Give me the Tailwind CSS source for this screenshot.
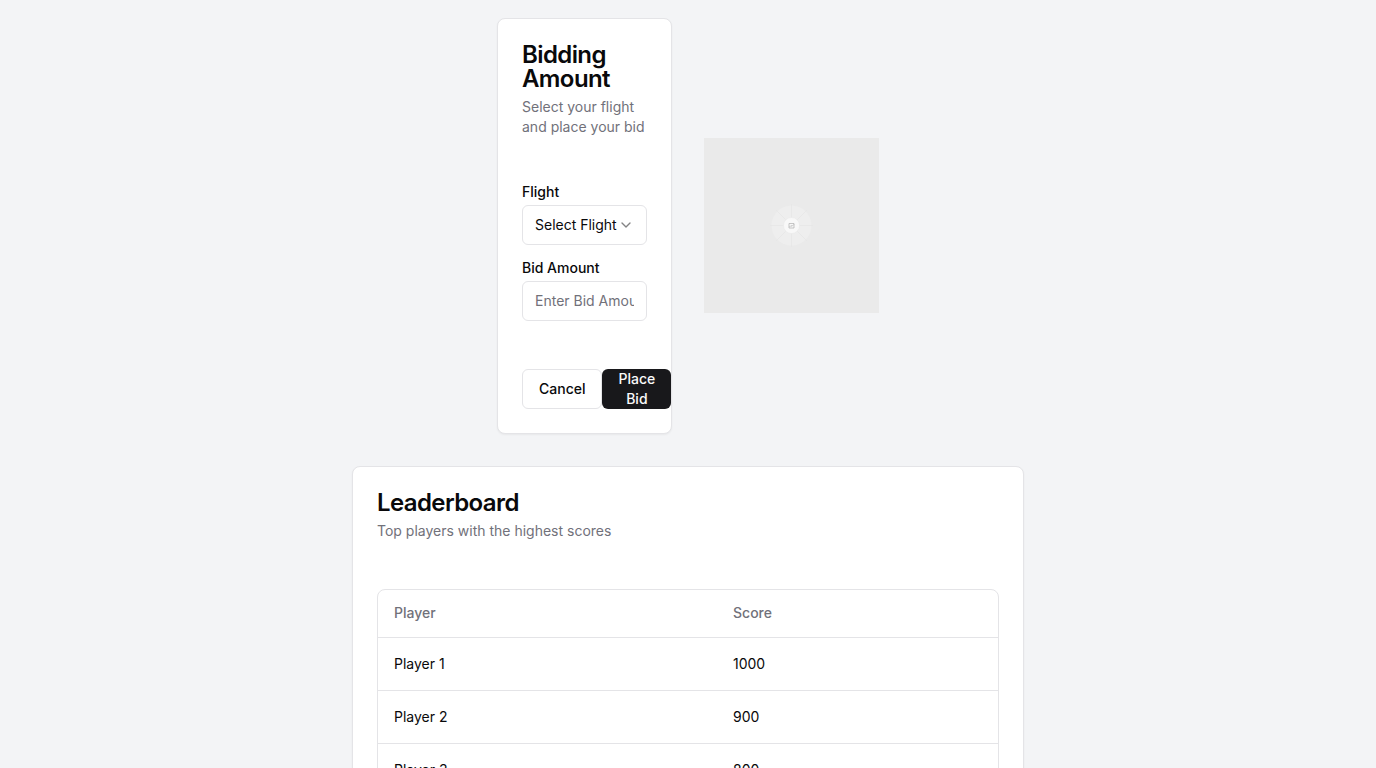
<!DOCTYPE html>
<html lang="en">
<head>
<meta charset="utf-8">
<meta name="viewport" content="width=device-width, initial-scale=1">
<title>Bidding</title>
<script src="https://cdn.jsdelivr.net/npm/@tailwindcss/browser@4"></script>
</head>
<body class="min-h-screen bg-gray-100 font-['Inter',sans-serif] text-zinc-950">
<main class="flex flex-col items-center gap-8 py-[18px]">
  <div class="grid w-full max-w-[382px] grid-cols-2 items-center gap-8">
    <section class="min-w-0 rounded-lg border border-[#e4e4e7] bg-white shadow-xs">
      <header class="flex flex-col gap-1.5 p-6">
        <h1 class="text-2xl leading-none font-semibold tracking-tight">Bidding Amount</h1>
        <p class="text-sm text-[#71717a]">Select your flight and place your bid</p>
      </header>
      <form id="bid" class="flex flex-col gap-4 p-6">
        <div class="flex flex-col gap-1.5">
          <label for="flight" class="text-sm leading-none font-medium">Flight</label>
          <div class="relative">
            <select id="flight" class="h-10 w-full appearance-none rounded-md border border-[#e4e4e7] bg-white px-3 text-sm">
              <option>Select Flight</option>
            </select>
            <svg class="pointer-events-none absolute top-3 right-[13px] size-4 opacity-50" viewBox="0 0 24 24" fill="none" stroke="currentColor" stroke-width="2" stroke-linecap="round" stroke-linejoin="round" aria-hidden="true"><path d="m6 9 6 6 6-6"/></svg>
          </div>
        </div>
        <div class="flex flex-col gap-1.5">
          <label for="amount" class="text-sm leading-none font-medium">Bid Amount</label>
          <input id="amount" type="text" placeholder="Enter Bid Amount" class="h-10 w-full rounded-md border border-[#e4e4e7] bg-white px-3 pb-0.5 text-sm placeholder:text-[#71717a]">
        </div>
      </form>
      <footer class="flex items-center justify-between p-6">
        <button type="reset" form="bid" class="flex h-10 items-center justify-center rounded-md border border-[#e4e4e7] bg-white px-4 text-sm font-medium">Cancel</button>
        <button type="submit" form="bid" class="flex h-10 items-center justify-center rounded-md bg-[#18181b] px-4 text-sm font-medium text-zinc-50">Place Bid</button>
      </footer>
    </section>
    <div class="pb-0.5">
      <svg class="block aspect-square w-full bg-[#eaeaea]" viewBox="0 0 175 175" fill="none" role="img" aria-label="Placeholder">
        <circle cx="87.500" cy="87.500" r="20" fill="#eeeeee"/>
        <path d="M87.500 66v43M66 87.500h43M72 72l31 31M103 72l-31 31" stroke="#e5e5e5" stroke-width=".7"/>
        <circle cx="87.500" cy="87.500" r="8" fill="#f8f8f8" stroke="#e7e7e7" stroke-width=".5"/>
        <path d="M85 85.500h5v4.500h-5zM85.500 89l1.500-1.500 1 .8 2-2" stroke="#b0b0b0" stroke-width=".7"/>
      </svg>
    </div>
  </div>
  <section class="w-full max-w-2xl rounded-lg border border-[#e4e4e7] bg-white shadow-xs">
    <header class="flex flex-col gap-1.5 p-6">
      <h2 class="text-2xl leading-none font-semibold tracking-tight">Leaderboard</h2>
      <p class="text-sm text-[#71717a]">Top players with the highest scores</p>
    </header>
    <div class="p-6">
      <div class="overflow-hidden rounded-lg border border-[#e4e4e7]">
        <table class="w-full text-left text-sm">
          <thead>
            <tr class="border-b border-[#e4e4e7] text-[#71717a]">
              <th scope="col" class="h-[47px] px-4 font-medium">Player</th>
              <th scope="col" class="h-[47px] px-4 font-medium">Score</th>
            </tr>
          </thead>
          <tbody>
            <tr class="border-b border-[#e4e4e7]"><td class="p-4">Player 1</td><td class="p-4">1000</td></tr>
            <tr class="border-b border-[#e4e4e7]"><td class="p-4">Player 2</td><td class="p-4">900</td></tr>
            <tr><td class="p-4">Player 3</td><td class="p-4">800</td></tr>
          </tbody>
        </table>
      </div>
    </div>
  </section>
</main>
</body>
</html>
